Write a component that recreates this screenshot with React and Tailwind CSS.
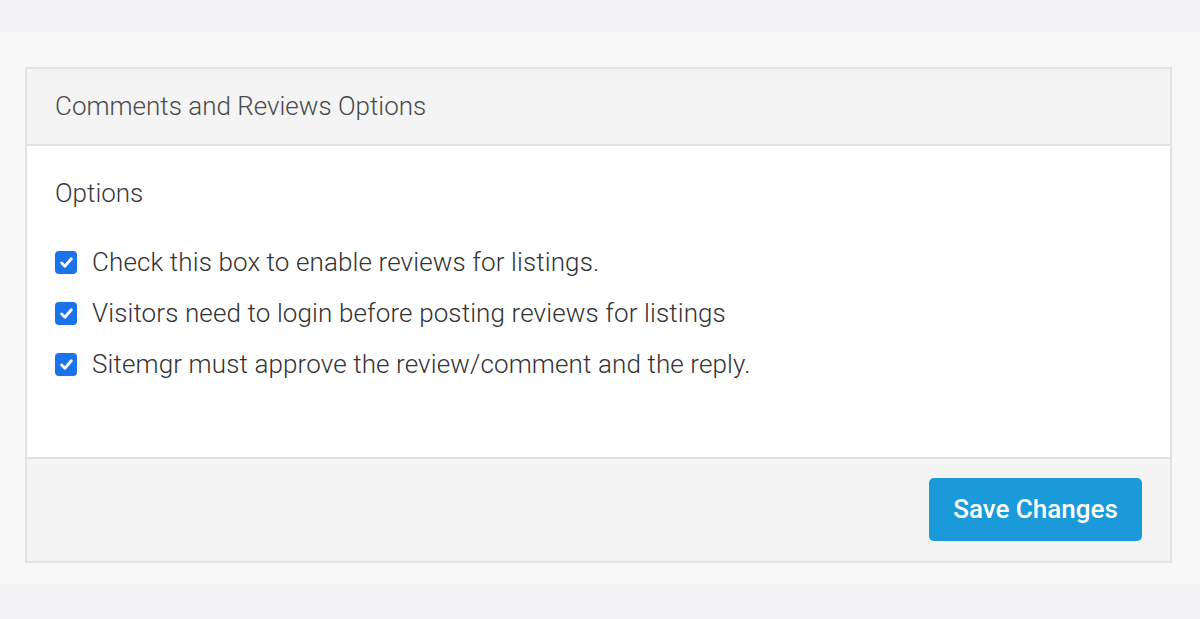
export default function App() {
  const options = [
    "Check this box to enable reviews for listings.",
    "Visitors need to login before posting reviews for listings",
    "Sitemgr must approve the review/comment and the reply.",
  ];

  return (
    <div className="w-[1200px] h-[619px] bg-[#f4f4f6] font-['Roboto',sans-serif]">
      <div className="h-[32px]" />
      <div className="h-[552px] bg-[#f8f8f8] pt-[35px] pl-[25px] pr-[28px]">
        {/* Panel */}
        <div className="border-2 border-[#e2e2e2] bg-white">
          <div className="h-[77px] bg-[#f4f4f4] border-b-2 border-[#e2e2e2] flex items-center pl-[28px]">
            <h2 className="text-[26px] font-light text-[#4a4a4a]">Comments and Reviews Options</h2>
          </div>
          <div className="h-[311px] pl-[28px] pt-[31px]">
            <p className="text-[26px] font-light text-[#3a3a3a] leading-[32px]">Options</p>
            <div className="mt-[37px] flex flex-col gap-[19px]">
              {options.map((o) => (
                <label key={o} className="flex items-center gap-[15px] h-[32px]">
                  <span className="w-[22px] h-[23px] rounded-[4px] bg-[#1a73e8] flex items-center justify-center">
                    <svg width="15" height="15" viewBox="0 0 14 14" fill="none">
                      <path d="M2.5 7.5 L5.5 10.5 L11.5 3.5" stroke="white" strokeWidth="2.6" strokeLinecap="round" strokeLinejoin="round" />
                    </svg>
                  </span>
                  <span className="text-[26px] font-light text-[#333] tracking-[0.12px]">{o}</span>
                </label>
              ))}
            </div>
          </div>
          <div className="h-[104px] bg-[#f4f4f4] border-t-2 border-[#e2e2e2] flex justify-end pr-[28px] pt-[19px]">
            <button className="w-[213px] h-[63px] rounded-[5px] bg-[#1a9ad9] text-white text-[26px] font-medium">
              Save Changes
            </button>
          </div>
        </div>
      </div>
    </div>
  );
}
